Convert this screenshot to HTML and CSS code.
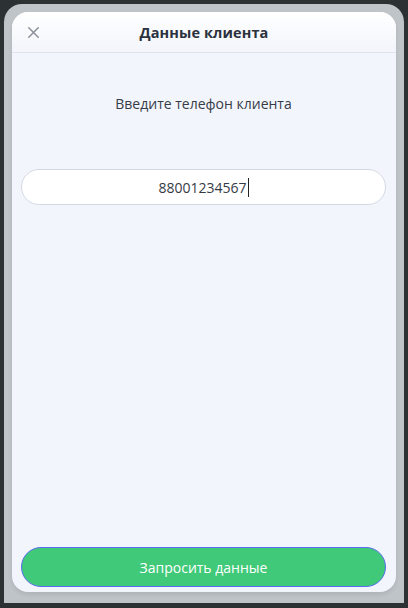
FILE: index.html
```html
<!DOCTYPE html>
<html lang="ru">
<head>
<meta charset="utf-8">
<title>Данные клиента</title>
<link rel="stylesheet" href="styles.css">
</head>
<body>
<div class="backdrop">
  <div class="modal">
    <div class="header">
      <button class="close" aria-label="Закрыть">
        <svg width="11" height="11" viewBox="0 0 11 11"><path d="M0.8 0.8 L10.2 10.2 M10.2 0.8 L0.8 10.2" stroke="#8b9099" stroke-width="1.5" stroke-linecap="round"/></svg>
      </button>
      <div class="title">Данные клиента</div>
    </div>
    <div class="body">
      <div class="prompt">Введите телефон клиента</div>
      <div class="field"><span class="value">88001234567</span><span class="caret"></span></div>
      <button class="submit">Запросить данные</button>
    </div>
  </div>
</div>
</body>
</html>
```
FILE: styles.css
```css
html, body {
  margin: 0;
  padding: 0;
}
body {
  background: #2c3234;
  width: 408px;
  height: 608px;
  overflow: hidden;
  font-family: "Open Sans", "Noto Sans", sans-serif;
}
.backdrop {
  margin: 4px;
  width: 400px;
  height: 599px;
  box-sizing: border-box;
  padding: 8px 8px 0 8px;
  background: #bfc4c8;
  border-radius: 18px 18px 0 0;
}
.modal {
  width: 384px;
  height: 580px;
  background: #f2f5fc;
  border-radius: 16px;
  box-shadow: 0 3px 4px rgba(0, 0, 0, 0.08);
  display: flex;
  flex-direction: column;
  overflow: hidden;
}
.header {
  height: 40px;
  flex: none;
  border-bottom: 1px solid #dde3ef;
  background: linear-gradient(#ffffff, #f3f5fb);
  display: flex;
  align-items: center;
  justify-content: center;
  position: relative;
}
.close {
  position: absolute;
  left: 16px;
  top: 15px;
  width: 11px;
  height: 11px;
  padding: 0;
  border: 0;
  background: none;
  display: flex;
}
.title {
  font-size: 14.5px;
  font-weight: 700;
  color: #2b323d;
  letter-spacing: 0.1px;
}
.body {
  flex: 1;
  display: flex;
  flex-direction: column;
  padding: 0 10px 5px 9px;
}
.prompt {
  margin-top: 41px;
  line-height: 20px;
  text-align: center;
  font-size: 14px;
  color: #363c47;
}
.field {
  margin-top: 55px;
  height: 36px;
  box-sizing: border-box;
  border: 1px solid #d3d8e2;
  border-radius: 18px;
  background: #ffffff;
  display: flex;
  align-items: center;
  justify-content: center;
  font-size: 14px;
  color: #353b45;
}
.caret {
  width: 1px;
  height: 19px;
  background: #222;
  margin-left: 1px;
}
.submit {
  margin-top: auto;
  height: 40px;
  border: 1px solid #5a6bef;
  border-radius: 20px;
  background: #40c978;
  color: #ffffff;
  font-family: "Open Sans", "Noto Sans", sans-serif;
  font-size: 14px;
  padding: 0;
}
```
